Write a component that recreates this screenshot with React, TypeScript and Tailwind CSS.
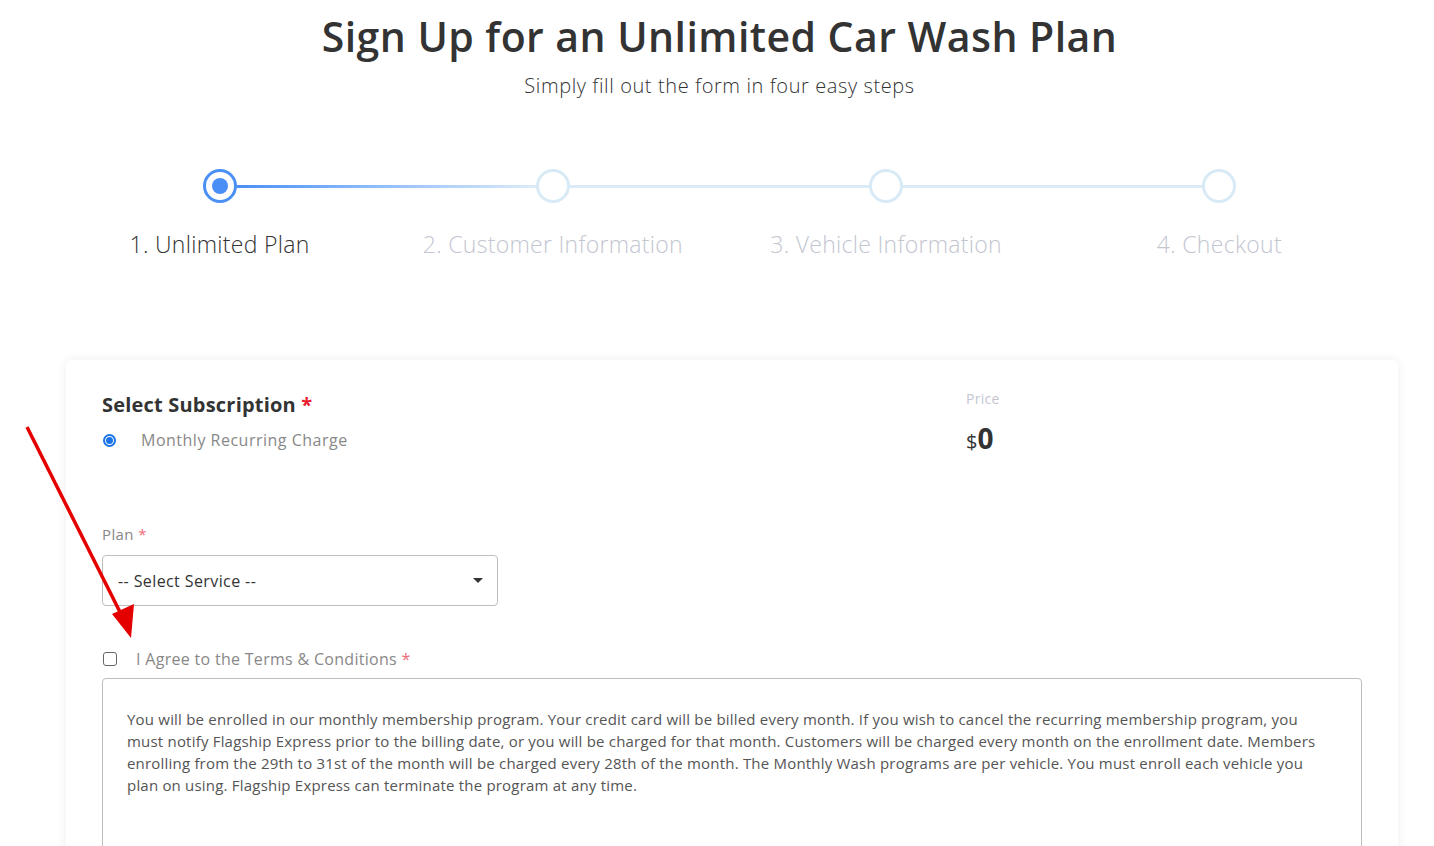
import React from 'react'

const steps = [
  { label: '1. Unlimited Plan', active: true },
  { label: '2. Customer Information', active: false },
  { label: '3. Vehicle Information', active: false },
  { label: '4. Checkout', active: false },
]

const terms = [
  'You will be enrolled in our monthly membership program. Your credit card will be billed every month. If you wish to cancel the recurring membership program, you',
  'must notify Flagship Express prior to the billing date, or you will be charged for that month. Customers will be charged every month on the enrollment date. Members',
  'enrolling from the 29th to 31st of the month will be charged every 28th of the month. The Monthly Wash programs are per vehicle. You must enroll each vehicle you',
  'plan on using. Flagship Express can terminate the program at any time.',
]

const Stepper = () => {
  return (
    <div className="mt-[70px]">
      <div className="flex items-center ml-[203px] w-[1033px]">
        <div className="w-[34px] h-[34px] rounded-full border-[3px] border-[#4a90f5] bg-white flex items-center justify-center shrink-0">
          <div className="w-[16px] h-[16px] rounded-full bg-[#4a8ff5]" />
        </div>
        <div className="flex-1 h-[3px] bg-gradient-to-r from-[#4a8ff5] to-[#dcecf7]" />
        <div className="w-[34px] h-[34px] rounded-full border-[3px] border-[#d7eaf6] bg-white shrink-0" />
        <div className="flex-1 h-[3px] bg-[#dcecf7]" />
        <div className="w-[34px] h-[34px] rounded-full border-[3px] border-[#d7eaf6] bg-white shrink-0" />
        <div className="flex-1 h-[3px] bg-[#dcecf7]" />
        <div className="w-[34px] h-[34px] rounded-full border-[3px] border-[#d7eaf6] bg-white shrink-0" />
      </div>
      <div className="grid grid-cols-4 ml-[53px] w-[1333px] mt-[26px]">
        {steps.map((s) => (
          <div
            key={s.label}
            className={
              'text-center text-[23px] font-light tracking-[0.3px] leading-[30px] ' +
              (s.active ? 'text-[#333]' : 'text-[#c3c6d1]')
            }
          >
            {s.label}
          </div>
        ))}
      </div>
    </div>
  )
}

const App = () => {
  return (
    <div
      className="relative min-h-screen bg-white text-[#333] overflow-hidden"
      style={{ fontFamily: '"Open Sans", "Noto Sans", sans-serif' }}
    >
      <div className="flex flex-col items-center pt-[10px] pl-[5px]">
        <h1 className="text-[41px] font-semibold leading-[52px] tracking-[0.45px] text-[#333]">
          Sign Up for an Unlimited Car Wash Plan
        </h1>
        <p className="mt-[11px] text-[20px] font-light leading-[26px] tracking-[0.6px] text-[#333]">
          Simply fill out the form in four easy steps
        </p>
      </div>

      <Stepper />

      <div className="mx-[66px] mt-[101px] w-[1332px] rounded-[6px] bg-white shadow-[0_0_12px_rgba(0,0,0,0.07)] px-[36px] pt-[30px] pb-[40px]">
        <div className="flex">
          <div className="w-[864px]">
            <h2 className="text-[20px] font-bold leading-[30px] tracking-[0.2px] text-[#333]">
              Select Subscription <span className="text-[#e8202f]">*</span>
            </h2>
            <label className="mt-[9px] flex items-center">
              <span className="ml-[1px] w-[13px] h-[13px] rounded-full border-[2px] border-[#1a73e8] flex items-center justify-center">
                <span className="w-[7px] h-[7px] rounded-full bg-[#1a73e8]" />
              </span>
              <span className="ml-[25px] text-[16px] leading-[22px] tracking-[0.5px] text-[#888]">
                Monthly Recurring Charge
              </span>
            </label>
          </div>
          <div>
            <div className="text-[14px] leading-[18px] tracking-[0.3px] text-[#c3c6d1]">Price</div>
            <div className="mt-[16px] flex items-baseline leading-[28px]">
              <span className="text-[20px] text-[#333]">$</span>
              <span className="text-[28px] font-bold text-[#333]">0</span>
            </div>
          </div>
        </div>

        <div className="mt-[68px]">
          <div className="text-[15px] leading-[20px] tracking-[0.4px] text-[#888]">
            Plan <span className="text-[#f06b78]">*</span>
          </div>
          <div className="mt-[11px] w-[396px] h-[51px] rounded-[4px] border border-[#bdbdbd] flex items-center justify-between pl-[15px] pr-[14px]">
            <span className="text-[16px] tracking-[0.4px] text-[#333]">-- Select Service --</span>
            <svg width="10" height="6" viewBox="0 0 10 6">
              <path d="M0 0 L10 0 L5 5 Z" fill="#333" />
            </svg>
          </div>
        </div>

        <div className="mt-[42px] flex items-center">
          <span className="ml-[1px] w-[14px] h-[14px] rounded-[3px] border border-[#666] bg-white" />
          <span className="ml-[19px] text-[16px] leading-[22px] tracking-[0.3px] text-[#888]">
            I Agree to the Terms &amp; Conditions <span className="text-[#f06b78]">*</span>
          </span>
        </div>

        <div className="mt-[8px] h-[220px] rounded-[4px] border border-[#bdbdbd] px-[24px] pt-[29px]">
          {terms.map((line) => (
            <div key={line} className="text-[15px] leading-[22px] tracking-[0.2px] text-[#555] whitespace-nowrap">
              {line}
            </div>
          ))}
        </div>
      </div>

      <svg className="absolute left-0 top-0 pointer-events-none" width="160" height="660">
        <line x1="27" y1="427" x2="124" y2="620" stroke="#e50000" strokeWidth="3.5" />
        <polygon points="131,638 112,614 134,604" fill="#e50000" />
      </svg>
    </div>
  )
}

export default App
